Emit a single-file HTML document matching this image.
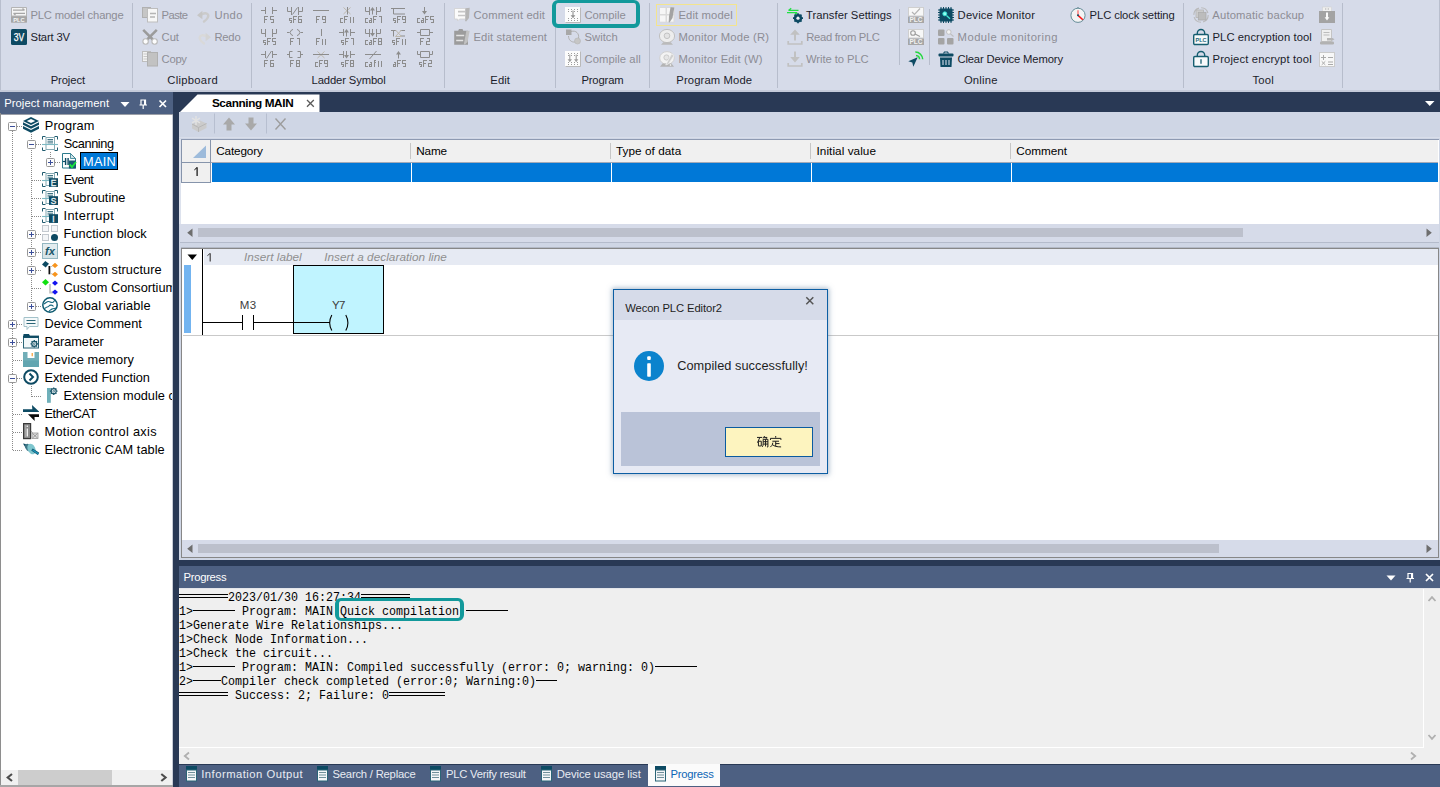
<!DOCTYPE html>
<html><head><meta charset="utf-8"><title>Wecon PLC Editor2</title>
<style>
html,body{margin:0;padding:0;}
body{width:1440px;height:787px;overflow:hidden;position:relative;background:#293955;font-family:"Liberation Sans",sans-serif;font-size:12px;color:#1e1e1e;}
.a{position:absolute;}
svg{display:block;overflow:visible;}
.t{position:absolute;white-space:nowrap;line-height:16px;height:16px;}
.m{position:absolute;white-space:pre;font-family:"Liberation Mono",monospace;font-size:13.5px;line-height:15px;height:15px;color:#000;transform:scaleX(0.8642);transform-origin:0 0;}
</style></head><body>
<div class="a" style="left:0px;top:0px;width:1440px;height:90px;background:#d6dbe9;"></div>
<div class="a" style="left:0px;top:90px;width:1440px;height:2px;background:#c4cad9;"></div>
<div class="a" style="left:0px;top:0px;width:1px;height:90px;background:#b9bfce;"></div>
<div class="a" style="left:1439px;top:0px;width:1px;height:90px;background:#b9bfce;"></div>
<div class="a" style="left:132px;top:3px;width:1px;height:85px;background:#b7bdcc;"></div>
<div class="a" style="left:251px;top:3px;width:1px;height:85px;background:#b7bdcc;"></div>
<div class="a" style="left:444px;top:3px;width:1px;height:85px;background:#b7bdcc;"></div>
<div class="a" style="left:555px;top:3px;width:1px;height:85px;background:#b7bdcc;"></div>
<div class="a" style="left:649px;top:3px;width:1px;height:85px;background:#b7bdcc;"></div>
<div class="a" style="left:777px;top:3px;width:1px;height:85px;background:#b7bdcc;"></div>
<div class="a" style="left:1183px;top:3px;width:1px;height:85px;background:#b7bdcc;"></div>
<div class="a" style="left:1342px;top:3px;width:1px;height:85px;background:#b7bdcc;"></div>
<div class="a" style="left:899px;top:9px;width:1px;height:56px;background:#b7bdcc;"></div>
<div class="a" style="left:929px;top:9px;width:1px;height:56px;background:#b7bdcc;"></div>
<div class="t" style="left:30.40px;top:9px;font-size:11.25px;line-height:12px;height:12px;color:#8d8d95;letter-spacing:-0.16px;">PLC model change</div>
<div class="t" style="left:30.60px;top:31px;font-size:11.25px;line-height:12px;height:12px;color:#1b1b2b;letter-spacing:-0.18px;">Start 3V</div>
<div class="t" style="left:50.70px;top:74px;font-size:11.25px;line-height:12px;height:12px;color:#1b1b2b;letter-spacing:-0.11px;">Project</div>
<div class="t" style="left:161.60px;top:9px;font-size:11.25px;line-height:12px;height:12px;color:#8d8d95;letter-spacing:-0.61px;">Paste</div>
<div class="t" style="left:214.40px;top:9px;font-size:11.25px;line-height:12px;height:12px;color:#8d8d95;letter-spacing:0.37px;">Undo</div>
<div class="t" style="left:161.60px;top:31px;font-size:11.25px;line-height:12px;height:12px;color:#8d8d95;letter-spacing:-0.05px;">Cut</div>
<div class="t" style="left:214.40px;top:31px;font-size:11.25px;line-height:12px;height:12px;color:#8d8d95;letter-spacing:-0.20px;">Redo</div>
<div class="t" style="left:161.60px;top:53px;font-size:11.25px;line-height:12px;height:12px;color:#8d8d95;letter-spacing:-0.29px;">Copy</div>
<div class="t" style="left:167.30px;top:74px;font-size:11.25px;line-height:12px;height:12px;color:#1b1b2b;letter-spacing:0.28px;">Clipboard</div>
<div class="t" style="left:311.50px;top:74px;font-size:11.25px;line-height:12px;height:12px;color:#1b1b2b;letter-spacing:-0.12px;">Ladder Symbol</div>
<div class="t" style="left:473.50px;top:9px;font-size:11.25px;line-height:12px;height:12px;color:#8d8d95;letter-spacing:0.13px;">Comment edit</div>
<div class="t" style="left:473.50px;top:31px;font-size:11.25px;line-height:12px;height:12px;color:#8d8d95;letter-spacing:0.12px;">Edit statement</div>
<div class="t" style="left:490.30px;top:74px;font-size:11.25px;line-height:12px;height:12px;color:#1b1b2b;letter-spacing:0.10px;">Edit</div>
<div class="t" style="left:584.50px;top:9px;font-size:11.25px;line-height:12px;height:12px;color:#8d8d95;letter-spacing:-0.01px;">Compile</div>
<div class="t" style="left:584.50px;top:31px;font-size:11.25px;line-height:12px;height:12px;color:#8d8d95;letter-spacing:0.01px;">Switch</div>
<div class="t" style="left:584.50px;top:53px;font-size:11.25px;line-height:12px;height:12px;color:#8d8d95;letter-spacing:0.06px;">Compile all</div>
<div class="t" style="left:581.40px;top:74px;font-size:11.25px;line-height:12px;height:12px;color:#1b1b2b;letter-spacing:-0.14px;">Program</div>
<div class="a" style="left:656px;top:4px;width:81px;height:22px;background:transparent;border:1px solid #f3e48e;box-sizing:border-box;"></div>
<div class="t" style="left:678.50px;top:9px;font-size:11.25px;line-height:12px;height:12px;color:#8d8d95;letter-spacing:0.12px;">Edit model</div>
<div class="t" style="left:678.50px;top:31px;font-size:11.25px;line-height:12px;height:12px;color:#8d8d95;letter-spacing:0.20px;">Monitor Mode (R)</div>
<div class="t" style="left:678.50px;top:53px;font-size:11.25px;line-height:12px;height:12px;color:#8d8d95;letter-spacing:0.19px;">Monitor Edit (W)</div>
<div class="t" style="left:676.30px;top:74px;font-size:11.25px;line-height:12px;height:12px;color:#1b1b2b;letter-spacing:0.12px;">Program Mode</div>
<div class="t" style="left:806.00px;top:9px;font-size:11.25px;line-height:12px;height:12px;color:#1b1b2b;letter-spacing:0.03px;">Transfer Settings</div>
<div class="t" style="left:806.30px;top:31px;font-size:11.25px;line-height:12px;height:12px;color:#8d8d95;letter-spacing:-0.32px;">Read from PLC</div>
<div class="t" style="left:806.00px;top:53px;font-size:11.25px;line-height:12px;height:12px;color:#8d8d95;letter-spacing:-0.08px;">Write to PLC</div>
<div class="t" style="left:957.60px;top:9px;font-size:11.25px;line-height:12px;height:12px;color:#1b1b2b;letter-spacing:0.18px;">Device Monitor</div>
<div class="t" style="left:957.60px;top:31px;font-size:11.25px;line-height:12px;height:12px;color:#8d8d95;letter-spacing:0.46px;">Module monitoring</div>
<div class="t" style="left:957.40px;top:53px;font-size:11.25px;line-height:12px;height:12px;color:#1b1b2b;letter-spacing:-0.14px;">Clear Device Memory</div>
<div class="t" style="left:1089.60px;top:9px;font-size:11.25px;line-height:12px;height:12px;color:#1b1b2b;letter-spacing:-0.11px;">PLC clock setting</div>
<div class="t" style="left:963.90px;top:74px;font-size:11.25px;line-height:12px;height:12px;color:#1b1b2b;letter-spacing:0.22px;">Online</div>
<div class="t" style="left:1212.30px;top:9px;font-size:11.25px;line-height:12px;height:12px;color:#8d8d95;letter-spacing:0.16px;">Automatic backup</div>
<div class="t" style="left:1212.50px;top:31px;font-size:11.25px;line-height:12px;height:12px;color:#1b1b2b;letter-spacing:0.06px;">PLC encryption tool</div>
<div class="t" style="left:1212.50px;top:53px;font-size:11.25px;line-height:12px;height:12px;color:#1b1b2b;letter-spacing:0.15px;">Project encrypt tool</div>
<div class="t" style="left:1252.50px;top:74px;font-size:11.25px;line-height:12px;height:12px;color:#1b1b2b;letter-spacing:0.22px;">Tool</div>
<div class="a" style="left:552px;top:0px;width:88px;height:28px;background:transparent;border:4px solid #12999b;border-top-width:3px;border-radius:6px;box-sizing:border-box;"></div>
<svg class="a" style="left:11px;top:7px" width="16" height="16" viewBox="0 0 16 16"><rect x="0" y="0" width="16" height="15.500" rx="1" fill="#b4b4b4"/><rect x="1" y="1" width="14" height="7.500" fill="#f5f5f5"/><path d="M2 3.200h11.500M11.500 1.500l2 1.700M14 6.300H2.500M4.500 8L2.500 6.300" stroke="#a6a6a6" stroke-width="1.300" fill="none"/><rect x="0" y="9.500" width="16" height="6" fill="#a6a6a6"/><text x="8" y="14.600" font-size="6.200" font-weight="bold" fill="#f6f6f6" text-anchor="middle" font-family="Liberation Sans" textLength="11.500" lengthAdjust="spacingAndGlyphs">PLC</text></svg>
<svg class="a" style="left:11px;top:29px" width="16" height="16" viewBox="0 0 16 16"><rect x="0" y="0" width="16" height="16" rx="1.500" fill="#0d4a63"/><text x="8" y="11.800" font-size="10.500" fill="#fff" stroke="#fff" stroke-width=".25" text-anchor="middle" font-family="Liberation Sans" textLength="10.500" lengthAdjust="spacingAndGlyphs">3V</text></svg>
<svg class="a" style="left:142px;top:7px" width="16" height="16" viewBox="0 0 16 16"><rect x="0.500" y="0.500" width="8" height="10" fill="#c6c6c6" stroke="#b0b0b0"/><rect x="5.500" y="1.500" width="10" height="13.500" fill="#f7f7f7" stroke="#bdbdbd"/><path d="M8 6.500h6M8 10h5" stroke="#b5b5b5" stroke-width="1.400"/></svg>
<svg class="a" style="left:142px;top:29px" width="16" height="16" viewBox="0 0 16 16"><path d="M1.200 0.800L10.800 10.500M14.800 0.800L5.200 10.500" stroke="#9b9b9b" stroke-width="2.500" fill="none"/><circle cx="3.600" cy="12.500" r="2.700" fill="#fdfdfd" stroke="#b9b9b9" stroke-width="1.100"/><circle cx="12.600" cy="12.500" r="2.700" fill="#fdfdfd" stroke="#b9b9b9" stroke-width="1.100"/></svg>
<svg class="a" style="left:142px;top:51px" width="16" height="16" viewBox="0 0 16 16"><rect x="0.500" y="0.500" width="8" height="10" fill="#f2f2f2" stroke="#bdbdbd"/><path d="M1.500 3h4M1.500 5.500h4M1.500 8h4" stroke="#c8c8c8"/><rect x="5.500" y="1.500" width="10" height="13.500" fill="#c2c2c2" stroke="#b0b0b0"/></svg>
<svg class="a" style="left:197px;top:9px" width="13" height="13" viewBox="0 0 13 13"><path d="M5 5.200C9 3 12.500 5 10.800 8.500C10 10 8.500 11.500 7 12.500" stroke="#cbcbcb" stroke-width="2.400" fill="none" stroke-linecap="round"/><path d="M0 6.200l5.400-4.400v8.400z" fill="#c6c6c6"/></svg>
<svg class="a" style="left:198px;top:31px" width="13" height="13" viewBox="0 0 13 13"><path d="M8 5.200C4 3 0.500 5 2.200 8.500C3 10 4.500 11.500 6 12.500" stroke="#d9d9d9" stroke-width="2.400" fill="none" stroke-linecap="round"/><path d="M13 6.200L7.600 1.800v8.400z" fill="#d4d4d4"/></svg>
<svg class="a" style="left:454px;top:7px" width="16" height="16" viewBox="0 0 16 16"><path d="M0.500 1.500h11v10.500H5.500l-2 2V12h-3z" fill="#fbfbfb" stroke="#d0d0d0" stroke-width=".8"/><path d="M4 4.600h7M4 8.500h7" stroke="#c6c6c6" stroke-width="1.600"/><path d="M11.400 1.200L15.700 0.800 15 11 12.200 14.600 11 14 11.400 12z" fill="#b6b6b6"/></svg>
<svg class="a" style="left:454px;top:29px" width="16" height="16" viewBox="0 0 16 16"><path d="M0.200 1.700h4l.8-1.700h3.500l.8 1.700h4.700v14h-13.800z" fill="#9c9c9c"/><path d="M2.200 6.600h8M2.200 11.400h7" stroke="#e4e4e4" stroke-width="1.500"/><path d="M12.300 2L15.700 1.700 13.600 13 10.500 15.700 10 14.500z" fill="#c2c2c2"/></svg>
<svg class="a" style="left:565px;top:7px" width="16" height="16" viewBox="0 0 16 16"><rect x="0" y="0" width="15.500" height="15.500" fill="#fcfcfc"/><path d="M0.500 15.500h15V0.500" stroke="#b9b9b9" stroke-width="1" fill="none"/><path d="M3.5 2v3M3.5 11v4" stroke="#9c9c9c" stroke-width="1" stroke-dasharray="1 1"/><path d="M6.5 2v3M6.5 11v4" stroke="#9c9c9c" stroke-width="1" stroke-dasharray="1 1"/><path d="M9.5 2v3M9.5 11v4" stroke="#9c9c9c" stroke-width="1" stroke-dasharray="1 1"/><path d="M12.5 2v3M12.5 11v4" stroke="#9c9c9c" stroke-width="1" stroke-dasharray="1 1"/><path d="M8 3.500v6" stroke="#909090" stroke-width="1.100"/><path d="M5.600 8.300h4.800L8 11.300z" fill="#909090"/></svg>
<svg class="a" style="left:565px;top:51px" width="16" height="16" viewBox="0 0 16 16"><rect x="0" y="0" width="15.500" height="15.500" fill="#fcfcfc"/><path d="M0.500 15.500h15V0.500" stroke="#b9b9b9" stroke-width="1" fill="none"/><path d="M3.5 2v3M3.5 11v4" stroke="#9c9c9c" stroke-width="1" stroke-dasharray="1 1"/><path d="M6.5 2v3M6.5 11v4" stroke="#9c9c9c" stroke-width="1" stroke-dasharray="1 1"/><path d="M9.5 2v3M9.5 11v4" stroke="#9c9c9c" stroke-width="1" stroke-dasharray="1 1"/><path d="M12.5 2v3M12.5 11v4" stroke="#9c9c9c" stroke-width="1" stroke-dasharray="1 1"/><path d="M4.800 3.500v6M11.200 3.500v6" stroke="#a0a0a0" stroke-width="1.100"/><path d="M2.600 8.300h4.400L4.800 11.300zM9 8.300h4.400L11.200 11.300z" fill="#a0a0a0"/></svg>
<svg class="a" style="left:565px;top:29px" width="16" height="16" viewBox="0 0 16 16"><path d="M6 2.500c5-1.500 8.500 2 7.500 7M3.500 7c0 4 3 6.500 6.500 6" stroke="#b0b0b0" stroke-width="1" fill="none"/><rect x="1" y="0.500" width="5.500" height="5.500" fill="#a8a8a8"/><circle cx="12.500" cy="12" r="3" fill="#c6c6c6" stroke="#b4b4b4" stroke-width=".6"/></svg>
<svg class="a" style="left:659px;top:7px" width="16" height="16" viewBox="0 0 16 16"><rect x="0" y="0" width="15.500" height="15.700" fill="#dadada"/><rect x="1" y="1" width="5.500" height="6" fill="#f6f6f6"/><rect x="8" y="1" width="6.500" height="6" fill="#f6f6f6"/><rect x="1" y="8.500" width="5.500" height="6.200" fill="#f6f6f6"/><rect x="8" y="8.500" width="6.500" height="6.200" fill="#f6f6f6"/><path d="M11.500 0.300L15.300 0.500 13.500 11l-3 4.500-.8-.3 .3-6z" fill="#a3a3a3"/></svg>
<svg class="a" style="left:659px;top:29px" width="16" height="16" viewBox="0 0 16 16"><ellipse cx="8" cy="7" rx="7.600" ry="6.600" fill="#ededed" stroke="#c0c0c0"/><circle cx="8" cy="6.800" r="2.800" fill="#e3e3e3" stroke="#c3c3c3"/><path d="M2 15.800L4.200 13.300h7.600L14 15.800z" fill="#bababa"/></svg>
<svg class="a" style="left:659px;top:51px" width="16" height="16" viewBox="0 0 16 16"><ellipse cx="8" cy="7" rx="7.300" ry="6.400" fill="#f3f3f3" stroke="#d0d0d0"/><circle cx="7.500" cy="6.500" r="2.600" fill="#e6e6e6" stroke="#cacaca"/><path d="M1 15.800L3.500 12.500h9L15 15.800z" fill="#b4b4b4"/><path d="M12.500 3l2.500 1.500-5.500 8.500-2.800 1z" fill="#cfcfcf" stroke="#f0f0f0" stroke-width=".7"/><circle cx="11.500" cy="14" r=".8" fill="#fff"/></svg>
<svg class="a" style="left:787px;top:7px" width="16" height="16" viewBox="0 0 16 16"><path d="M1.500 3.400h10M4.200 1.300L1.500 3.400" stroke="#1fe043" stroke-width="1.300" fill="none"/><path d="M0 5.600h10.200M8 7.600l2.200-2" stroke="#1fe043" stroke-width="1.300" fill="none"/><g transform="translate(11,11.200)"><circle r="3.100" fill="none" stroke="#0d4a63" stroke-width="2.200"/><g stroke="#0d4a63" stroke-width="1.700"><path d="M0-5V5M-5 0H5M-3.500-3.500l7 7M3.500-3.500l-7 7"/></g><circle r="1.600" fill="#eef1f7"/></g></svg>
<svg class="a" style="left:787px;top:29px" width="16" height="16" viewBox="0 0 16 16"><path d="M8 0.600L12.800 5.800H9V11.400H7V5.800H3.200z" fill="#c1c1c1"/><path d="M1.200 12v3h13.600v-3" stroke="#c1c1c1" stroke-width="1.700" fill="none"/></svg>
<svg class="a" style="left:787px;top:51px" width="16" height="16" viewBox="0 0 16 16"><path d="M7 0.500h2V6h3.800L8 11.400 3.200 6H7z" fill="#c1c1c1"/><path d="M1.200 12v3h13.600v-3" stroke="#c1c1c1" stroke-width="1.700" fill="none"/></svg>
<svg class="a" style="left:908px;top:7px" width="16" height="16" viewBox="0 0 16 16"><rect x="0.500" y="0.500" width="15" height="8.500" fill="#f7f7f7" stroke="#cfcfcf"/><path d="M4 5l2.500 2.500L12 1.500" stroke="#b4b4b4" stroke-width="1.200" fill="none"/><rect x="0" y="9.500" width="16" height="6.500" fill="#a6a6a6"/><text x="8" y="15" font-size="6.500" font-weight="bold" fill="#f2f2f2" text-anchor="middle" font-family="Liberation Sans">PLC</text></svg>
<svg class="a" style="left:908px;top:29px" width="16" height="16" viewBox="0 0 16 16"><rect x="0.500" y="0.500" width="15" height="8.500" fill="#f7f7f7" stroke="#cfcfcf"/><circle cx="5" cy="4" r="2.300" fill="none" stroke="#9c9c9c" stroke-width="1.100"/><path d="M7 5l5 2.500" stroke="#9c9c9c" stroke-width="1.200"/><rect x="0" y="9.500" width="16" height="6.500" fill="#a6a6a6"/><text x="8" y="15" font-size="6.500" font-weight="bold" fill="#f2f2f2" text-anchor="middle" font-family="Liberation Sans">PLC</text></svg>
<svg class="a" style="left:908px;top:51px" width="16" height="16" viewBox="0 0 16 16"><path d="M0.300 10.300L9.700 6.300 5.300 15.800 4.300 11.600z" fill="#0d4a63"/><path d="M8 4.400A3.800 3.800 0 0 1 11.500 8.200M7.300 1.100A7.300 7.300 0 0 1 14.700 8.300" stroke="#22d83c" stroke-width="1.500" fill="none"/></svg>
<svg class="a" style="left:938px;top:7px" width="16" height="16" viewBox="0 0 16 16"><g stroke="#0d4a63" stroke-width="1"><path d="M3 0v16M5.500 0v16M8 0v16M10.500 0v16M13 0v16M0 3h16M0 5.500h16M0 8h16M0 10.500h16M0 13h16"/></g><rect x="1.500" y="1.500" width="13" height="13" rx="1" fill="#0d4a63"/><circle cx="6.800" cy="6.800" r="2" fill="#8ffff0" stroke="#2fe0d2" stroke-width=".9"/><path d="M8.500 8.500l3.500 3.200" stroke="#43e6d6" stroke-width="1.300"/></svg>
<svg class="a" style="left:938px;top:29px" width="16" height="16" viewBox="0 0 16 16"><rect x="0" y="0.500" width="6.500" height="6.500" rx="1" fill="#a4a4a4"/><rect x="0" y="9" width="6.500" height="6.500" rx="1" fill="#a4a4a4"/><rect x="9" y="9" width="6.500" height="6.500" rx="1" fill="#a4a4a4"/><circle cx="10.800" cy="3" r="2.300" fill="#f2f2f2" stroke="#bdbdbd" stroke-width=".9"/><path d="M12.500 4.800L15.500 7.500" stroke="#bdbdbd" stroke-width="1.100"/></svg>
<svg class="a" style="left:938px;top:51px" width="16" height="16" viewBox="0 0 16 16"><path d="M5.500 2.500l1-1.500h3l1 1.500" stroke="#0d4a63" stroke-width="1.200" fill="none"/><rect x="0.500" y="2.500" width="15" height="3" rx="1" fill="#0d4a63"/><path d="M2 6.500h12l-.5 9.500h-11z" fill="#0d4a63"/><path d="M5 9v5M8 9v5M11 9v5" stroke="#d6dbe9" stroke-width="1.100"/></svg>
<svg class="a" style="left:1070px;top:7px" width="16" height="16" viewBox="0 0 16 16"><path d="M8 0v1.200" stroke="#7d9ba5" stroke-width="1.400"/><circle cx="8" cy="8.300" r="7.100" fill="#f3f3f3" stroke="#5f8894" stroke-width=".95"/><path d="M8 3.300V8" stroke="#ff6262" stroke-width="1.200"/><path d="M8.300 8.600l4.500 4.200" stroke="#ff1414" stroke-width="1.500"/><circle cx="8" cy="8.300" r="1" fill="#0d4a63"/></svg>
<svg class="a" style="left:1193px;top:7px" width="16" height="16" viewBox="0 0 16 16"><circle cx="8" cy="8" r="7.200" fill="none" stroke="#b9b9b9" stroke-width="1.100" stroke-dasharray="9 2.300"/><rect x="3" y="3" width="7.500" height="7.500" fill="#cdcdcd" stroke="#b4b4b4" stroke-width=".8"/><rect x="5.300" y="5.300" width="7.700" height="7.700" fill="#bcbcbc" stroke="#ababab" stroke-width=".8"/></svg>
<svg class="a" style="left:1193px;top:29px" width="16" height="16" viewBox="0 0 16 16"><path d="M4.300 5.500V4.200a3.700 3.700 0 0 1 7.400 0v1.300" stroke="#165e70" stroke-width="1.400" fill="none"/><rect x="0.700" y="5.500" width="14.600" height="10" rx="1.200" fill="#f8fafb" stroke="#165e70" stroke-width="1.400"/><text x="8" y="13" font-size="6.200" font-weight="bold" fill="#1f6a7c" text-anchor="middle" font-family="Liberation Sans" textLength="11" lengthAdjust="spacingAndGlyphs">PLC</text></svg>
<svg class="a" style="left:1193px;top:51px" width="16" height="16" viewBox="0 0 16 16"><path d="M4.300 5.500V4.200a3.700 3.700 0 0 1 7.400 0v1.300" stroke="#165e70" stroke-width="1.400" fill="none"/><rect x="0.700" y="5.500" width="14.600" height="10" rx="1.200" fill="#f8fafb" stroke="#165e70" stroke-width="1.400"/><path d="M8 8.300v4.400" stroke="#165e70" stroke-width="1.300"/></svg>
<svg class="a" style="left:1319px;top:7px" width="16" height="16" viewBox="0 0 16 16"><rect x="3.500" y="0" width="9" height="4.500" fill="#f0f0f0" stroke="#d2d2d2" stroke-width=".6"/><path d="M6 2h1.300M8.700 2H10" stroke="#a8a8a8" stroke-width="1"/><rect x="0" y="4" width="16" height="12" fill="#a3a3a3"/><path d="M8 5.500v6" stroke="#fafafa" stroke-width="2"/><path d="M5.600 10.300L8 13.500l2.400-3.200z" fill="#fafafa"/></svg>
<svg class="a" style="left:1319px;top:29px" width="16" height="16" viewBox="0 0 16 16"><path d="M2.500 0.500h10v12h-10z" fill="#efefef" stroke="#c4c4c4"/><path d="M4.500 3.500h6M4.500 6h6" stroke="#bcbcbc" stroke-width="1.100"/><path d="M8 9h5.500l2 1.200-2 1.300H8z" fill="#b6b6b6"/><rect x="1" y="12.500" width="14" height="3" rx="1.300" fill="#b2b2b2"/></svg>
<svg class="a" style="left:1319px;top:51px" width="16" height="16" viewBox="0 0 16 16"><rect x="0.500" y="1.500" width="15" height="14" fill="#f8f8f8" stroke="#cbcbcb"/><path d="M2 6.500h5M4.500 4v5M9 6.500h5M2.700 10.300l3.600 3.600M6.300 10.300l-3.600 3.600M9 11h5M9 13.500h5" stroke="#aaaaaa" stroke-width="1"/></svg>
<svg class="a" style="left:261px;top:7px" width="16" height="16" viewBox="0 0 16 16"><g stroke="#8c8c8c" stroke-width="1" fill="none"><path d="M0 3.500h4.500M4.500 0v7 M16 3.500h-4.500M11.500 0v7"/></g><g stroke="#8c8c8c" stroke-width="1" fill="none" shape-rendering="crispEdges"><path transform="translate(3.5 9.500)" d="M0 6V0H3M0 3H2"/><path transform="translate(9.5 9.500)" d="M3 0H0V3H3V6H0"/></g></svg>
<svg class="a" style="left:287px;top:7px" width="16" height="16" viewBox="0 0 16 16"><g stroke="#8c8c8c" stroke-width="1" fill="none"><path d="M0.500 0v4.500h4M4.500 0v8 M15.500 0v4.500h-4M11.500 0v8 M5.500 7.500L10.500 0.500"/></g><g stroke="#8c8c8c" stroke-width="1" fill="none" shape-rendering="crispEdges"><path transform="translate(2.5 9.500)" d="M2 2H0V4H2V6H0"/><path transform="translate(6.5 9.500)" d="M0 6V0H3M0 3H2"/><path transform="translate(11.5 9.500)" d="M3 0H0V6H3V3H0"/></g></svg>
<svg class="a" style="left:313px;top:7px" width="16" height="16" viewBox="0 0 16 16"><g stroke="#8c8c8c" stroke-width="1" fill="none"><path d="M0 3.500h16"/></g><g stroke="#8c8c8c" stroke-width="1" fill="none" shape-rendering="crispEdges"><path transform="translate(3.5 9.500)" d="M0 6V0H3M0 3H2"/><path transform="translate(9.5 9.500)" d="M3 3H0V0H3V6H0"/></g></svg>
<svg class="a" style="left:339px;top:7px" width="16" height="16" viewBox="0 0 16 16"><g stroke="#8c8c8c" stroke-width="1" fill="none"><path d="M4.500 0.500l7 6.500M11.500 0.500l-7 6.500" stroke="#bdb8ad"/><path d="M8.500 0v7.500"/></g><g stroke="#8c8c8c" stroke-width="1" fill="none" shape-rendering="crispEdges"><path transform="translate(1.5 9.500)" d="M2 2H0V6H2"/><path transform="translate(5.5 9.500)" d="M0 6V0H3M0 3H2"/><path transform="translate(10.5 9.500)" d="M0.500 0V6"/><path transform="translate(13.5 9.500)" d="M0.500 0V6"/></g></svg>
<svg class="a" style="left:365px;top:7px" width="16" height="16" viewBox="0 0 16 16"><g stroke="#8c8c8c" stroke-width="1" fill="none"><path d="M0.500 0v4.500h4M4.500 0v8 M15.500 0v4.500h-4M11.500 0v8"/><path d="M7.500 7.500V1"/><path fill="#8c8c8c" stroke="none" d="M5 3.600L7.500 0l2.500 3.600z"/></g><g stroke="#8c8c8c" stroke-width="1" fill="none" shape-rendering="crispEdges"><path transform="translate(0.5 9.500)" d="M2 2H0V6H2"/><path transform="translate(4.5 9.500)" d="M0 2H2V6H0V4H2"/><path transform="translate(8.5 9.500)" d="M0 6V0H3M0 3H2"/><path transform="translate(13.5 9.500)" d="M0 0H3V6"/></g></svg>
<svg class="a" style="left:391px;top:7px" width="16" height="16" viewBox="0 0 16 16"><g stroke="#8c8c8c" stroke-width="1" fill="none"><path d="M0 1.500h14M2.500 1.500v5.500h11.500"/></g><g stroke="#8c8c8c" stroke-width="1" fill="none" shape-rendering="crispEdges"><path transform="translate(2.5 9.500)" d="M2 2H0V4H2V6H0"/><path transform="translate(6.5 9.500)" d="M0 6V0H3M0 3H2"/><path transform="translate(11.5 9.500)" d="M3 3H0V0H3V6H0"/></g></svg>
<svg class="a" style="left:417px;top:7px" width="16" height="16" viewBox="0 0 16 16"><g stroke="#8c8c8c" stroke-width="1" fill="none"><path d="M7.500 0V6"/><path fill="#8c8c8c" stroke="none" d="M5 3.900L7.500 7.500l2.500-3.600z"/></g><g stroke="#8c8c8c" stroke-width="1" fill="none" shape-rendering="crispEdges"><path transform="translate(0.5 9.500)" d="M2 2H0V6H2"/><path transform="translate(4.5 9.500)" d="M0 2H2V6H0V4H2"/><path transform="translate(8.5 9.500)" d="M0 6V0H3M0 3H2"/><path transform="translate(13.5 9.500)" d="M3 0H0V3H3V6H0"/></g></svg>
<svg class="a" style="left:261px;top:29px" width="16" height="16" viewBox="0 0 16 16"><g stroke="#8c8c8c" stroke-width="1" fill="none"><path d="M0.500 0v4.500h4M4.500 0v8 M15.500 0v4.500h-4M11.500 0v8"/></g><g stroke="#8c8c8c" stroke-width="1" fill="none" shape-rendering="crispEdges"><path transform="translate(2.5 9.500)" d="M2 2H0V4H2V6H0"/><path transform="translate(6.5 9.500)" d="M0 6V0H3M0 3H2"/><path transform="translate(11.5 9.500)" d="M3 0H0V3H3V6H0"/></g></svg>
<svg class="a" style="left:287px;top:29px" width="16" height="16" viewBox="0 0 16 16"><g stroke="#8c8c8c" stroke-width="1" fill="none"><path d="M0 3.500h2.500M16 3.500h-2.500M6 0.500L4.500 1 3 3.500 4.500 6 6 6.500M10 0.500L11.500 1 13 3.500 11.500 6 10 6.500"/></g><g stroke="#8c8c8c" stroke-width="1" fill="none" shape-rendering="crispEdges"><path transform="translate(3.5 9.500)" d="M0 6V0H3M0 3H2"/><path transform="translate(9.5 9.500)" d="M0 0H3V6"/></g></svg>
<svg class="a" style="left:313px;top:29px" width="16" height="16" viewBox="0 0 16 16"><g stroke="#8c8c8c" stroke-width="1" fill="none"><path d="M8.500 0v7"/></g><g stroke="#8c8c8c" stroke-width="1" fill="none" shape-rendering="crispEdges"><path transform="translate(3.5 9.500)" d="M0 6V0H3M0 3H2"/><path transform="translate(8.5 9.500)" d="M0.500 0V6"/><path transform="translate(11.5 9.500)" d="M0.500 0V6"/></g></svg>
<svg class="a" style="left:339px;top:29px" width="16" height="16" viewBox="0 0 16 16"><g stroke="#8c8c8c" stroke-width="1" fill="none"><path d="M0 3.500h4.500M4.500 0v7 M16 3.500h-4.500M11.500 0v7"/><path d="M7.500 7.500V1"/><path fill="#8c8c8c" stroke="none" d="M5 3.600L7.500 0l2.500 3.600z"/></g><g stroke="#8c8c8c" stroke-width="1" fill="none" shape-rendering="crispEdges"><path transform="translate(2.5 9.500)" d="M2 2H0V4H2V6H0"/><path transform="translate(6.5 9.500)" d="M0 6V0H3M0 3H2"/><path transform="translate(11.5 9.500)" d="M0 0H3V6"/></g></svg>
<svg class="a" style="left:365px;top:29px" width="16" height="16" viewBox="0 0 16 16"><g stroke="#8c8c8c" stroke-width="1" fill="none"><path d="M0.500 0v4.500h4M4.500 0v8 M15.500 0v4.500h-4M11.500 0v8"/><path d="M7.500 0V6"/><path fill="#8c8c8c" stroke="none" d="M5 3.900L7.500 7.500l2.500-3.600z"/></g><g stroke="#8c8c8c" stroke-width="1" fill="none" shape-rendering="crispEdges"><path transform="translate(0.5 9.500)" d="M2 2H0V6H2"/><path transform="translate(4.5 9.500)" d="M0 2H2V6H0V4H2"/><path transform="translate(8.5 9.500)" d="M0 6V0H3M0 3H2"/><path transform="translate(13.5 9.500)" d="M0 0H3V6H0ZM0 3H3"/></g></svg>
<svg class="a" style="left:391px;top:29px" width="16" height="16" viewBox="0 0 16 16"><g stroke="#8c8c8c" stroke-width="1" fill="none"><path d="M0 1.500h5M2.500 1.500v6M9.500 1.500h4.500M9.500 7h4.500" /><path d="M4.500 1l6 6.500M10.500 1l-6 6.500M4.500 7.500h6" stroke="#bdb8ad"/></g><g stroke="#8c8c8c" stroke-width="1" fill="none" shape-rendering="crispEdges"><path transform="translate(1.5 9.500)" d="M2 2H0V4H2V6H0"/><path transform="translate(5.5 9.500)" d="M0 6V0H3M0 3H2"/><path transform="translate(10.5 9.500)" d="M0.500 0V6"/><path transform="translate(13.5 9.500)" d="M0.500 0V6"/></g></svg>
<svg class="a" style="left:417px;top:29px" width="16" height="16" viewBox="0 0 16 16"><g stroke="#8c8c8c" stroke-width="1" fill="none"><path d="M0 3.500h3.500M12.500 3.500H16M3.500 0.500h9v6h-9z"/></g><g stroke="#8c8c8c" stroke-width="1" fill="none" shape-rendering="crispEdges"><path transform="translate(3.5 9.500)" d="M0 6V0H3M0 3H2"/><path transform="translate(9.5 9.500)" d="M0 0H3V3H0V6H3"/></g></svg>
<svg class="a" style="left:261px;top:51px" width="16" height="16" viewBox="0 0 16 16"><g stroke="#8c8c8c" stroke-width="1" fill="none"><path d="M0 3.500h4.500M4.500 0v7 M16 3.500h-4.500M11.500 0v7 M5.500 7.500L10.500 0"/></g><g stroke="#8c8c8c" stroke-width="1" fill="none" shape-rendering="crispEdges"><path transform="translate(3.5 9.500)" d="M0 6V0H3M0 3H2"/><path transform="translate(9.5 9.500)" d="M3 0H0V6H3V3H0"/></g></svg>
<svg class="a" style="left:287px;top:51px" width="16" height="16" viewBox="0 0 16 16"><g stroke="#8c8c8c" stroke-width="1" fill="none"><path d="M0 3.500h2.500M16 3.500h-2.500M5.500 0.500h-3v6h3M10.500 0.500h3v6h-3"/></g><g stroke="#8c8c8c" stroke-width="1" fill="none" shape-rendering="crispEdges"><path transform="translate(3.5 9.500)" d="M0 6V0H3M0 3H2"/><path transform="translate(9.5 9.500)" d="M0 0H3V6H0ZM0 3H3"/></g></svg>
<svg class="a" style="left:313px;top:51px" width="16" height="16" viewBox="0 0 16 16"><g stroke="#8c8c8c" stroke-width="1" fill="none"><path d="M4.500 0.500l7 6.500M11.500 0.500l-7 6.500" stroke="#bdb8ad"/><path d="M0 3.500h16"/></g><g stroke="#8c8c8c" stroke-width="1" fill="none" shape-rendering="crispEdges"><path transform="translate(2.5 9.500)" d="M2 2H0V6H2"/><path transform="translate(6.5 9.500)" d="M0 6V0H3M0 3H2"/><path transform="translate(11.5 9.500)" d="M3 3H0V0H3V6H0"/></g></svg>
<svg class="a" style="left:339px;top:51px" width="16" height="16" viewBox="0 0 16 16"><g stroke="#8c8c8c" stroke-width="1" fill="none"><path d="M0 3.500h4.500M4.500 0v7 M16 3.500h-4.500M11.500 0v7"/><path d="M7.500 0V6"/><path fill="#8c8c8c" stroke="none" d="M5 3.900L7.500 7.500l2.500-3.600z"/></g><g stroke="#8c8c8c" stroke-width="1" fill="none" shape-rendering="crispEdges"><path transform="translate(2.5 9.500)" d="M2 2H0V4H2V6H0"/><path transform="translate(6.5 9.500)" d="M0 6V0H3M0 3H2"/><path transform="translate(11.5 9.500)" d="M0 0H3V6H0ZM0 3H3"/></g></svg>
<svg class="a" style="left:365px;top:51px" width="16" height="16" viewBox="0 0 16 16"><g stroke="#8c8c8c" stroke-width="1" fill="none"><path d="M0 3.500h16M4.500 8L11.500 0"/></g><g stroke="#8c8c8c" stroke-width="1" fill="none" shape-rendering="crispEdges"><path transform="translate(0.5 9.500)" d="M2 2H0V6H2"/><path transform="translate(4.5 9.500)" d="M0 2H2V6H0V4H2"/><path transform="translate(8.5 9.500)" d="M2 0H1V6M0 2H2"/><path transform="translate(12.5 9.500)" d="M0.500 0V6"/><path transform="translate(15.5 9.500)" d="M0.500 0V6"/></g></svg>
<svg class="a" style="left:391px;top:51px" width="16" height="16" viewBox="0 0 16 16"><g stroke="#8c8c8c" stroke-width="1" fill="none"><path d="M7.500 7.500V1"/><path fill="#8c8c8c" stroke="none" d="M5 3.600L7.500 0l2.500 3.600z"/></g><g stroke="#8c8c8c" stroke-width="1" fill="none" shape-rendering="crispEdges"><path transform="translate(2.5 9.500)" d="M0 2H2V6H0V4H2"/><path transform="translate(6.5 9.500)" d="M0 6V0H3M0 3H2"/><path transform="translate(11.5 9.500)" d="M3 0H0V3H3V6H0"/></g></svg>
<svg class="a" style="left:417px;top:51px" width="16" height="16" viewBox="0 0 16 16"><g stroke="#8c8c8c" stroke-width="1" fill="none"><path d="M0.500 0v3.500h3M15.500 0v3.500h-3M3.500 0.500h9v6h-9z"/></g><g stroke="#8c8c8c" stroke-width="1" fill="none" shape-rendering="crispEdges"><path transform="translate(2.5 9.500)" d="M2 2H0V4H2V6H0"/><path transform="translate(6.5 9.500)" d="M0 6V0H3M0 3H2"/><path transform="translate(11.5 9.500)" d="M0 0H3V3H0V6H3"/></g></svg>
<div class="a" style="left:0px;top:92px;width:173px;height:22px;background:#4d6082;"></div>
<div class="t" style="left:4.20px;top:97px;font-size:11.25px;line-height:12px;height:12px;color:#ffffff;letter-spacing:0.06px;">Project management</div>
<svg class="a" style="left:119px;top:98px" width="50" height="12" viewBox="0 0 50 12"><path d="M1.500 4h9l-4.500 5z" fill="#fff"/><path d="M22 2h4.500v5h-4.500zM20.500 7h7.500M24.200 7v4" stroke="#fff" stroke-width="1.200" fill="none"/><path d="M25.800 2v5" stroke="#fff" stroke-width="1.600"/><path d="M40.500 2.500l6.500 6.500M47 2.500l-6.500 6.500" stroke="#fff" stroke-width="1.700" fill="none"/></svg>
<div class="a" style="left:0px;top:114px;width:173px;height:673px;background:#ffffff;"></div>
<div class="a" style="left:0px;top:114px;width:173px;height:1px;background:#9b9fa8;"></div>
<div class="a" style="left:0px;top:113px;width:1px;height:674px;background:#8e8e8e;"></div>
<div class="a" style="left:172px;top:115px;width:1px;height:672px;background:#c8ccd6;"></div>
<div class="a" style="left:12px;top:131px;width:1px;height:320px;background:repeating-linear-gradient(to bottom,#8a8a8a 0 1px,transparent 1px 2px);"></div>
<div class="a" style="left:31px;top:134px;width:1px;height:173px;background:repeating-linear-gradient(to bottom,#8a8a8a 0 1px,transparent 1px 2px);"></div>
<div class="a" style="left:50px;top:152px;width:1px;height:11px;background:repeating-linear-gradient(to bottom,#8a8a8a 0 1px,transparent 1px 2px);"></div>
<div class="a" style="left:31px;top:386px;width:1px;height:11px;background:repeating-linear-gradient(to bottom,#8a8a8a 0 1px,transparent 1px 2px);"></div>
<div class="a" style="left:17px;top:126px;width:5px;height:1px;background:repeating-linear-gradient(to right,#8a8a8a 0 1px,transparent 1px 2px);"></div>
<div class="a" style="left:36px;top:144px;width:5px;height:1px;background:repeating-linear-gradient(to right,#8a8a8a 0 1px,transparent 1px 2px);"></div>
<div class="a" style="left:55px;top:162px;width:6px;height:1px;background:repeating-linear-gradient(to right,#8a8a8a 0 1px,transparent 1px 2px);"></div>
<div class="a" style="left:32px;top:180px;width:9px;height:1px;background:repeating-linear-gradient(to right,#8a8a8a 0 1px,transparent 1px 2px);"></div>
<div class="a" style="left:32px;top:198px;width:9px;height:1px;background:repeating-linear-gradient(to right,#8a8a8a 0 1px,transparent 1px 2px);"></div>
<div class="a" style="left:32px;top:216px;width:9px;height:1px;background:repeating-linear-gradient(to right,#8a8a8a 0 1px,transparent 1px 2px);"></div>
<div class="a" style="left:36px;top:234px;width:5px;height:1px;background:repeating-linear-gradient(to right,#8a8a8a 0 1px,transparent 1px 2px);"></div>
<div class="a" style="left:36px;top:252px;width:5px;height:1px;background:repeating-linear-gradient(to right,#8a8a8a 0 1px,transparent 1px 2px);"></div>
<div class="a" style="left:36px;top:270px;width:5px;height:1px;background:repeating-linear-gradient(to right,#8a8a8a 0 1px,transparent 1px 2px);"></div>
<div class="a" style="left:32px;top:288px;width:9px;height:1px;background:repeating-linear-gradient(to right,#8a8a8a 0 1px,transparent 1px 2px);"></div>
<div class="a" style="left:36px;top:306px;width:5px;height:1px;background:repeating-linear-gradient(to right,#8a8a8a 0 1px,transparent 1px 2px);"></div>
<div class="a" style="left:17px;top:324px;width:5px;height:1px;background:repeating-linear-gradient(to right,#8a8a8a 0 1px,transparent 1px 2px);"></div>
<div class="a" style="left:17px;top:342px;width:5px;height:1px;background:repeating-linear-gradient(to right,#8a8a8a 0 1px,transparent 1px 2px);"></div>
<div class="a" style="left:13px;top:360px;width:9px;height:1px;background:repeating-linear-gradient(to right,#8a8a8a 0 1px,transparent 1px 2px);"></div>
<div class="a" style="left:17px;top:378px;width:5px;height:1px;background:repeating-linear-gradient(to right,#8a8a8a 0 1px,transparent 1px 2px);"></div>
<div class="a" style="left:32px;top:396px;width:9px;height:1px;background:repeating-linear-gradient(to right,#8a8a8a 0 1px,transparent 1px 2px);"></div>
<div class="a" style="left:13px;top:414px;width:9px;height:1px;background:repeating-linear-gradient(to right,#8a8a8a 0 1px,transparent 1px 2px);"></div>
<div class="a" style="left:13px;top:432px;width:9px;height:1px;background:repeating-linear-gradient(to right,#8a8a8a 0 1px,transparent 1px 2px);"></div>
<div class="a" style="left:13px;top:450px;width:9px;height:1px;background:repeating-linear-gradient(to right,#8a8a8a 0 1px,transparent 1px 2px);"></div>
<svg class="a" style="left:8px;top:122px" width="9" height="9" viewBox="0 0 9 9"><rect x="0.500" y="0.500" width="8" height="8" rx="1" fill="#fdfdfd" stroke="#979797"/><path d="M2 4.500h5" stroke="#3b4e9a" stroke-width="1"/></svg>
<svg class="a" style="left:23px;top:117px" width="16" height="16" viewBox="0 0 16 16"><path d="M8 0L16 4 8 8 0 4z" fill="#0d4a63"/><path d="M8 1.900L12.200 4 8 6.100 3.800 4z" fill="#fff"/><path d="M0 5.300L8 9.300 16 5.300V7.800L8 11.800 0 7.800z" fill="#0d4a63"/><path d="M0 9.100L8 13.100 16 9.100V11.700L8 15.800 0 11.700z" fill="#0d4a63"/></svg>
<div class="t" style="left:44.75px;top:118px;font-size:12.75px;line-height:15px;height:15px;color:#000000;letter-spacing:0.13px;">Program</div>
<svg class="a" style="left:27px;top:140px" width="9" height="9" viewBox="0 0 9 9"><rect x="0.500" y="0.500" width="8" height="8" rx="1" fill="#fdfdfd" stroke="#979797"/><path d="M2 4.500h5" stroke="#3b4e9a" stroke-width="1"/></svg>
<svg class="a" style="left:42px;top:136px" width="16" height="16" viewBox="0 0 16 16"><path d="M0.500 3.500v-3h3M12.500 0.500h3v3M15.500 11.500v3h-3M3.500 14.500h-3v-3" stroke="#1f5b6e" stroke-width="1" fill="none"/><rect x="4" y="1.500" width="8.500" height="12" fill="#fdfefe" stroke="#86aab3" stroke-width="1"/><path d="M5.500 3.500h5.500M5.500 5.200h5.500M5.500 6.900h5.500" stroke="#2b6577" stroke-width=".9"/><path d="M0 8.500h16" stroke="#7db9c3" stroke-width="1.100"/></svg>
<div class="t" style="left:63.75px;top:136px;font-size:12.75px;line-height:15px;height:15px;color:#000000;letter-spacing:-0.42px;">Scanning</div>
<svg class="a" style="left:46px;top:158px" width="9" height="9" viewBox="0 0 9 9"><rect x="0.500" y="0.500" width="8" height="8" rx="1" fill="#fdfdfd" stroke="#979797"/><path d="M2 4.500h5" stroke="#3b4e9a" stroke-width="1"/><path d="M4.500 2v5" stroke="#3b4e9a" stroke-width="1"/></svg>
<svg class="a" style="left:61px;top:153px" width="16" height="16" viewBox="0 0 16 16"><path d="M1.500 0.500h8l5 5v9.500h-13z" fill="#fdfefe" stroke="#2b7a8c" stroke-width="1"/><path d="M9.500 0.500v5h5z" fill="#d3e3e8" stroke="#2b7a8c" stroke-width=".8"/><path d="M1.800 8.500h2.400" stroke="#0d4a63" stroke-width="1.200"/><path d="M4.600 5v7M7.100 5v7" stroke="#0d4a63" stroke-width="1.400"/><rect x="7.900" y="7.500" width="7.100" height="8" fill="#1b5a72"/><path d="M8.800 11.300l2.200 2.700 4-5" stroke="#19e63c" stroke-width="1.900" fill="none"/></svg>
<div class="a" style="left:80px;top:152px;width:38px;height:18px;background:#0078d7;border:1px solid #000;box-sizing:border-box;"></div>
<div class="t" style="left:83.10px;top:154px;font-size:12.75px;line-height:15px;height:15px;color:#ffffff;letter-spacing:0.21px;">MAIN</div>
<svg class="a" style="left:42px;top:172px" width="16" height="16" viewBox="0 0 16 16"><path d="M0.500 3.500v-3h3M12.500 0.500h3v3M15.500 11.500v3h-3M3.500 14.500h-3v-3" stroke="#1f5b6e" stroke-width="1" fill="none"/><rect x="4" y="1.500" width="8.500" height="12" fill="#fdfefe" stroke="#86aab3" stroke-width="1"/><path d="M5.500 3.500h5.500M5.500 5.200h5.500M5.500 6.900h5.500" stroke="#2b6577" stroke-width=".9"/><path d="M0 8.500h16" stroke="#7db9c3" stroke-width="1.100"/><rect x="7" y="6.200" width="9" height="8.700" fill="#0d4a63"/><text x="11.500" y="13.500" font-size="8.300" fill="#eef4f6" stroke="#eef4f6" stroke-width=".3" text-anchor="middle" font-family="Liberation Sans">E</text></svg>
<div class="t" style="left:63.75px;top:172px;font-size:12.75px;line-height:15px;height:15px;color:#000000;letter-spacing:-0.64px;">Event</div>
<svg class="a" style="left:42px;top:190px" width="16" height="16" viewBox="0 0 16 16"><path d="M0.500 3.500v-3h3M12.500 0.500h3v3M15.500 11.500v3h-3M3.500 14.500h-3v-3" stroke="#1f5b6e" stroke-width="1" fill="none"/><rect x="4" y="1.500" width="8.500" height="12" fill="#fdfefe" stroke="#86aab3" stroke-width="1"/><path d="M5.500 3.500h5.500M5.500 5.200h5.500M5.500 6.900h5.500" stroke="#2b6577" stroke-width=".9"/><path d="M0 8.500h16" stroke="#7db9c3" stroke-width="1.100"/><rect x="7" y="6.200" width="9" height="8.700" fill="#0d4a63"/><text x="11.500" y="13.500" font-size="8.300" fill="#eef4f6" stroke="#eef4f6" stroke-width=".3" text-anchor="middle" font-family="Liberation Sans">S</text></svg>
<div class="t" style="left:63.75px;top:190px;font-size:12.75px;line-height:15px;height:15px;color:#000000;">Subroutine</div>
<svg class="a" style="left:42px;top:208px" width="16" height="16" viewBox="0 0 16 16"><path d="M0.500 3.500v-3h3M12.500 0.500h3v3M15.500 11.500v3h-3M3.500 14.500h-3v-3" stroke="#1f5b6e" stroke-width="1" fill="none"/><rect x="4" y="1.500" width="8.500" height="12" fill="#fdfefe" stroke="#86aab3" stroke-width="1"/><path d="M5.500 3.500h5.500M5.500 5.200h5.500M5.500 6.900h5.500" stroke="#2b6577" stroke-width=".9"/><path d="M0 8.500h16" stroke="#7db9c3" stroke-width="1.100"/><rect x="7" y="6.200" width="9" height="8.700" fill="#0d4a63"/><text x="11.500" y="13.500" font-size="8.300" fill="#eef4f6" stroke="#eef4f6" stroke-width=".3" text-anchor="middle" font-family="Liberation Sans">I</text></svg>
<div class="t" style="left:63.50px;top:208px;font-size:12.75px;line-height:15px;height:15px;color:#000000;letter-spacing:0.35px;">Interrupt</div>
<svg class="a" style="left:27px;top:230px" width="9" height="9" viewBox="0 0 9 9"><rect x="0.500" y="0.500" width="8" height="8" rx="1" fill="#fdfdfd" stroke="#979797"/><path d="M2 4.500h5" stroke="#3b4e9a" stroke-width="1"/><path d="M4.500 2v5" stroke="#3b4e9a" stroke-width="1"/></svg>
<svg class="a" style="left:42px;top:225px" width="16" height="16" viewBox="0 0 16 16"><rect x="0.500" y="0.500" width="6" height="6" fill="#f3f5f7" stroke="#c3c9cf"/><rect x="9.500" y="0.500" width="6" height="6" fill="#f3f5f7" stroke="#c3c9cf"/><rect x="0.500" y="9.500" width="6" height="6" fill="#f3f5f7" stroke="#c3c9cf"/><circle cx="12.500" cy="12.500" r="3.500" fill="#0d4a63"/></svg>
<div class="t" style="left:63.50px;top:226px;font-size:12.75px;line-height:15px;height:15px;color:#000000;letter-spacing:0.08px;">Function block</div>
<svg class="a" style="left:27px;top:248px" width="9" height="9" viewBox="0 0 9 9"><rect x="0.500" y="0.500" width="8" height="8" rx="1" fill="#fdfdfd" stroke="#979797"/><path d="M2 4.500h5" stroke="#3b4e9a" stroke-width="1"/><path d="M4.500 2v5" stroke="#3b4e9a" stroke-width="1"/></svg>
<svg class="a" style="left:42px;top:243px" width="16" height="16" viewBox="0 0 16 16"><rect x="0.500" y="0.500" width="15" height="15" fill="#e3ecef" stroke="#93b7c1" stroke-width="1"/><rect x="1" y="8" width="14" height="7" fill="#d5e3e7"/><text x="8" y="11.500" font-size="10.500" font-style="italic" font-weight="bold" fill="#1a566a" text-anchor="middle" font-family="Liberation Sans" textLength="10" lengthAdjust="spacingAndGlyphs">fx</text></svg>
<div class="t" style="left:63.50px;top:244px;font-size:12.75px;line-height:15px;height:15px;color:#000000;letter-spacing:-0.23px;">Function</div>
<svg class="a" style="left:27px;top:266px" width="9" height="9" viewBox="0 0 9 9"><rect x="0.500" y="0.500" width="8" height="8" rx="1" fill="#fdfdfd" stroke="#979797"/><path d="M2 4.500h5" stroke="#3b4e9a" stroke-width="1"/><path d="M4.500 2v5" stroke="#3b4e9a" stroke-width="1"/></svg>
<svg class="a" style="left:42px;top:261px" width="16" height="16" viewBox="0 0 16 16"><path d="M7.400 5v8.300" stroke="#111" stroke-width="1.800"/><path d="M8 6.500l3-2M8 12l3 1.500" stroke="#c4c4c4" stroke-width="1"/><path d="M3.300 0l3.700 2.800-3.300 3.600L0 3.500z" fill="#0d4a63"/><path d="M13 1.800l3 2.600-3 2.600-3-2.600zM13 10.700l3 2.600-3 2.600-3-2.600z" fill="#f7941d"/></svg>
<div class="t" style="left:63.50px;top:262px;font-size:12.75px;line-height:15px;height:15px;color:#000000;letter-spacing:0.07px;">Custom structure</div>
<svg class="a" style="left:42px;top:279px" width="16" height="16" viewBox="0 0 16 16"><path d="M8 5v8.500h3" stroke="#c6c6c6" stroke-width="1.800" fill="none"/><path d="M3.500 0l3.500 3.300-3.500 3.300L0 3.300z" fill="#10e010"/><path d="M13 1.500l3 2.600-3 2.600-3-2.600zM13 10.500l3 2.600-3 2.600-3-2.600z" fill="#1414f0"/></svg>
<div class="t" style="left:63.50px;top:280px;font-size:12.75px;line-height:15px;height:15px;color:#000000;width:108.5px;overflow:hidden;">Custom Consortium</div>
<svg class="a" style="left:27px;top:302px" width="9" height="9" viewBox="0 0 9 9"><rect x="0.500" y="0.500" width="8" height="8" rx="1" fill="#fdfdfd" stroke="#979797"/><path d="M2 4.500h5" stroke="#3b4e9a" stroke-width="1"/><path d="M4.500 2v5" stroke="#3b4e9a" stroke-width="1"/></svg>
<svg class="a" style="left:42px;top:297px" width="16" height="16" viewBox="0 0 16 16"><circle cx="8" cy="8" r="7.200" fill="#fff" stroke="#0d5a70" stroke-width="1.500"/><path d="M1.500 7c2-.5 2.500-2 4.500-2.500s2.500 1.500 4.500 1 1.500-2.500 3-2.500M3 11.500c1-2 3-1 4-2.500s3.500-1 4.500.5M7 15c0-2 2-2 3-3s3 0 4-1" stroke="#1a6a80" stroke-width="1.100" fill="none"/></svg>
<div class="t" style="left:63.50px;top:298px;font-size:12.75px;line-height:15px;height:15px;color:#000000;letter-spacing:0.15px;">Global variable</div>
<svg class="a" style="left:8px;top:320px" width="9" height="9" viewBox="0 0 9 9"><rect x="0.500" y="0.500" width="8" height="8" rx="1" fill="#fdfdfd" stroke="#979797"/><path d="M2 4.500h5" stroke="#3b4e9a" stroke-width="1"/><path d="M4.500 2v5" stroke="#3b4e9a" stroke-width="1"/></svg>
<svg class="a" style="left:23px;top:315px" width="16" height="16" viewBox="0 0 16 16"><path d="M1 2.500h14v9H6.500l-2.500 3V11.500H1z" fill="#f5f9fa" stroke="#a3c2ca" stroke-width="1"/><path d="M3.500 5.500h9M3.500 8.500h9" stroke="#2b6577" stroke-width="1.100"/></svg>
<div class="t" style="left:44.50px;top:316px;font-size:12.75px;line-height:15px;height:15px;color:#000000;letter-spacing:-0.04px;">Device Comment</div>
<svg class="a" style="left:8px;top:338px" width="9" height="9" viewBox="0 0 9 9"><rect x="0.500" y="0.500" width="8" height="8" rx="1" fill="#fdfdfd" stroke="#979797"/><path d="M2 4.500h5" stroke="#3b4e9a" stroke-width="1"/><path d="M4.500 2v5" stroke="#3b4e9a" stroke-width="1"/></svg>
<svg class="a" style="left:23px;top:333px" width="16" height="16" viewBox="0 0 16 16"><path d="M0.500 3V1h5.500l1 2z" fill="#0d4a63"/><rect x="0.500" y="4.500" width="15" height="10.500" fill="#f1f7f9" stroke="#2b6577" stroke-width="1"/><rect x="0" y="2.600" width="16" height="2.200" fill="#0d4a63"/><path d="M13.60 10.80L15.10 10.80M12.93 12.43L13.99 13.49M11.30 13.10L11.30 14.60M9.67 12.43L8.61 13.49M9.00 10.80L7.50 10.80M9.67 9.17L8.61 8.11M11.30 8.50L11.30 7.00M12.93 9.17L13.99 8.11" stroke="#1a566a" stroke-width="1.300"/><circle cx="11.3" cy="10.8" r="2.5" fill="#fff" stroke="#1a566a" stroke-width="1.200"/><circle cx="11.3" cy="10.8" r=".9" fill="#fff" stroke="#1a566a" stroke-width=".7"/></svg>
<div class="t" style="left:44.50px;top:334px;font-size:12.75px;line-height:15px;height:15px;color:#000000;letter-spacing:-0.04px;">Parameter</div>
<svg class="a" style="left:23px;top:351px" width="16" height="16" viewBox="0 0 16 16"><path d="M0 1h4.500v6h7V1H16v15H0z" fill="#71aeb8"/><rect x="0" y="9.500" width="16" height="6.500" fill="#62a5b0"/><path d="M9.200 2v3.300" stroke="#f7941d" stroke-width="1.100"/></svg>
<div class="t" style="left:44.50px;top:352px;font-size:12.75px;line-height:15px;height:15px;color:#000000;letter-spacing:0.07px;">Device memory</div>
<svg class="a" style="left:8px;top:374px" width="9" height="9" viewBox="0 0 9 9"><rect x="0.500" y="0.500" width="8" height="8" rx="1" fill="#fdfdfd" stroke="#979797"/><path d="M2 4.500h5" stroke="#3b4e9a" stroke-width="1"/></svg>
<svg class="a" style="left:23px;top:369px" width="16" height="16" viewBox="0 0 16 16"><circle cx="8" cy="8" r="6.800" fill="#fff" stroke="#0d4a63" stroke-width="2"/><path d="M6.500 4.500L10 8l-3.500 3.500" stroke="#0d4a63" stroke-width="2" fill="none"/></svg>
<div class="t" style="left:44.50px;top:370px;font-size:12.75px;line-height:15px;height:15px;color:#000000;letter-spacing:-0.06px;">Extended Function</div>
<svg class="a" style="left:42px;top:387px" width="16" height="16" viewBox="0 0 16 16"><rect x="5" y="1" width="3.800" height="14.800" fill="#6fb0ba"/><path d="M14.00 4.20L15.50 4.20M13.33 5.83L14.39 6.89M11.70 6.50L11.70 8.00M10.07 5.83L9.01 6.89M9.40 4.20L7.90 4.20M10.07 2.57L9.01 1.51M11.70 1.90L11.70 0.40M13.33 2.57L14.39 1.51" stroke="#1a566a" stroke-width="1.300"/><circle cx="11.7" cy="4.2" r="2.5" fill="#fff" stroke="#1a566a" stroke-width="1.200"/><circle cx="11.7" cy="4.2" r=".9" fill="#fff" stroke="#1a566a" stroke-width=".7"/></svg>
<div class="t" style="left:63.50px;top:388px;font-size:12.75px;line-height:15px;height:15px;color:#000000;width:108.5px;overflow:hidden;">Extension module configuration</div>
<svg class="a" style="left:23px;top:405px" width="16" height="16" viewBox="0 0 16 16"><path d="M0 4.200H9.300L9 0 16 6.500V7H0z" fill="#0d4a63"/><path d="M5 9.200H16V12H11.500L11.700 16z" fill="#0a0a0a"/></svg>
<div class="t" style="left:44.50px;top:406px;font-size:12.75px;line-height:15px;height:15px;color:#000000;letter-spacing:-0.43px;">EtherCAT</div>
<svg class="a" style="left:23px;top:423px" width="16" height="16" viewBox="0 0 16 16"><rect x="0.600" y="0.600" width="7" height="15" fill="#8c8c8c" stroke="#3a3a3a" stroke-width="1.200"/><path d="M4.300 5.500v8" stroke="#f4f4f4" stroke-width="1.300"/><path d="M4.300 2.500v1.500" stroke="#f4f4f4" stroke-width="1.300"/><path d="M2.300 2v12" stroke="#b5b5b5" stroke-width=".8"/><rect x="9" y="10" width="6" height="5.500" fill="#dedede" stroke="#9a9a9a" stroke-width=".8"/><path d="M9.500 10.500l5 4.500M14.500 10.500l-5 4.500M8 8l1.500 2" stroke="#8a8a8a" stroke-width=".8"/></svg>
<div class="t" style="left:44.50px;top:424px;font-size:12.75px;line-height:15px;height:15px;color:#000000;letter-spacing:0.32px;">Motion control axis</div>
<svg class="a" style="left:23px;top:441px" width="16" height="16" viewBox="0 0 16 16"><path d="M0 2.500l2.500.5 2 3-1.500 1.500z" fill="#0d4a63"/><ellipse cx="5" cy="6.500" rx="2.600" ry="3.800" transform="rotate(-25 5 6.500)" fill="#3d7686"/><ellipse cx="8.500" cy="8" rx="3.800" ry="5.600" transform="rotate(-25 8.500 8)" fill="#7fc6ce"/><path d="M9 8.500l6.500 4.300" stroke="#0d4a63" stroke-width="2.600"/><path d="M9.500 8.800l6 4" stroke="#1f95b8" stroke-width="1.400"/></svg>
<div class="t" style="left:44.50px;top:442px;font-size:12.75px;line-height:15px;height:15px;color:#000000;letter-spacing:0.06px;">Electronic CAM table</div>
<div class="a" style="left:1px;top:770px;width:171px;height:15px;background:#f0f0f0;"></div>
<div class="a" style="left:18px;top:770px;width:94px;height:15px;background:#cdcdcd;"></div>
<div class="a" style="left:0px;top:785px;width:173px;height:2px;background:#a6a6a6;"></div>
<svg class="a" style="left:1px;top:770px" width="171" height="15" viewBox="0 0 171 15"><path d="M11 4l-4.300 3.500 4.300 3.500M160.300 4l4.300 3.500-4.300 3.500" stroke="#4c4c4c" stroke-width="2.100" fill="none"/></svg>
<div class="a" style="left:173px;top:92px;width:6px;height:695px;background:#293955;"></div>
<svg class="a" style="left:179px;top:94px" width="142" height="18" viewBox="0 0 142 18"><path d="M1 18L18.500 0.500H140.500V18z" fill="#fff"/><path d="M128 6l6.800 6.800M134.800 6L128 12.800" stroke="#5a5a5a" stroke-width="1.300" fill="none"/></svg>
<div class="t" style="left:211.90px;top:96px;font-size:11.75px;line-height:13px;height:13px;color:#000000;letter-spacing:-0.37px;font-weight:bold;">Scanning MAIN</div>
<svg class="a" style="left:1424px;top:100px" width="12" height="8" viewBox="0 0 12 8"><path d="M1 1h9.500L5.750 6z" fill="#fff"/></svg>
<div class="a" style="left:179px;top:112px;width:1261px;height:448px;background:#cfd6e5;"></div>
<div class="a" style="left:179px;top:137px;width:1261px;height:1px;background:#d9deea;"></div>
<svg class="a" style="left:186px;top:113px" width="110" height="24" viewBox="0 0 110 24"><path d="M28.500 0.500v20M80.500 0.500v20" stroke="#b7bfd0" stroke-width="1"/><path d="M43 4.500l-6 7h3.500v6h5v-6H49z" fill="#a9a9a9"/><path d="M65 17.500l-6-7h3.500v-6h5v6H71z" fill="#a9a9a9"/><path d="M89.500 5.500l10 11M99.500 5.500l-10 11" stroke="#9c9c9c" stroke-width="1.400" fill="none"/><path d="M6 11l8-3.500 6.500 3v4.500l-8 4-6.500-3.500z" fill="#cbcbcb"/><path d="M6 11l6.500 3.500 8-4M12.500 14.500v4.500" stroke="#b4b4b4" stroke-width=".9" fill="none"/><path d="M10 3v9M6 5.200l8 4.600M14 5.200l-8 4.600" stroke="#e2e2e2" stroke-width="1.500"/></svg>
<div class="a" style="left:181px;top:139px;width:1258px;height:85px;background:#ffffff;"></div>
<div class="a" style="left:179px;top:139px;width:2px;height:85px;background:#dde2ed;"></div>
<div class="a" style="left:181px;top:139px;width:1258px;height:1px;background:#8e9ab2;"></div>
<div class="a" style="left:181px;top:140px;width:1257px;height:22px;background:#f0f0f0;"></div>
<div class="a" style="left:181px;top:162px;width:1257px;height:1px;background:#a3aab8;"></div>
<div class="a" style="left:181px;top:163px;width:30px;height:20px;background:#f0f0f0;"></div>
<div class="a" style="left:181px;top:162px;width:30px;height:1px;background:#8694ab;"></div>
<div class="a" style="left:181px;top:182px;width:30px;height:1px;background:#8694ab;"></div>
<div class="a" style="left:210px;top:140px;width:1px;height:43px;background:#8694ab;"></div>
<div class="a" style="left:181px;top:140px;width:1px;height:43px;background:#8694ab;"></div>
<svg class="a" style="left:192px;top:145px" width="15" height="14" viewBox="0 0 15 14"><path d="M14 0.500V13H1z" fill="#9dbbdb"/></svg>
<svg class="a" style="left:194px;top:167px" width="5" height="10" viewBox="0 0 5 10"><path d="M0.400 2.900L2.900 0.700" stroke="#000" stroke-width="1" fill="none"/><path d="M3.100 0.300V9" stroke="#000" stroke-width="1.150"/></svg>
<div class="a" style="left:212px;top:163px;width:1226px;height:19px;background:#0078d7;"></div>
<div class="a" style="left:411px;top:163px;width:1px;height:19px;background:#ffffff;"></div>
<div class="a" style="left:410px;top:143px;width:1px;height:16px;background:#c6c6c6;"></div>
<div class="a" style="left:611px;top:163px;width:1px;height:19px;background:#ffffff;"></div>
<div class="a" style="left:610px;top:143px;width:1px;height:16px;background:#c6c6c6;"></div>
<div class="a" style="left:811px;top:163px;width:1px;height:19px;background:#ffffff;"></div>
<div class="a" style="left:810px;top:143px;width:1px;height:16px;background:#c6c6c6;"></div>
<div class="a" style="left:1011px;top:163px;width:1px;height:19px;background:#ffffff;"></div>
<div class="a" style="left:1010px;top:143px;width:1px;height:16px;background:#c6c6c6;"></div>
<div class="t" style="left:216.30px;top:144px;font-size:11.75px;line-height:13px;height:13px;color:#000000;letter-spacing:-0.17px;">Category</div>
<div class="t" style="left:416.30px;top:144px;font-size:11.75px;line-height:13px;height:13px;color:#000000;letter-spacing:-0.22px;">Name</div>
<div class="t" style="left:616.00px;top:144px;font-size:11.75px;line-height:13px;height:13px;color:#000000;letter-spacing:0.05px;">Type of data</div>
<div class="t" style="left:816.50px;top:144px;font-size:11.75px;line-height:13px;height:13px;color:#000000;letter-spacing:0.06px;">Initial value</div>
<div class="t" style="left:1016.30px;top:144px;font-size:11.75px;line-height:13px;height:13px;color:#000000;letter-spacing:-0.04px;">Comment</div>
<div class="a" style="left:180px;top:224px;width:1259px;height:18px;background:#d6dbe9;"></div>
<div class="a" style="left:180px;top:242px;width:1259px;height:1px;background:#b4bbcb;"></div>
<div class="a" style="left:198px;top:228px;width:1045px;height:9px;background:#bcc0cc;"></div>
<svg class="a" style="left:186px;top:226px" width="1250" height="12" viewBox="0 0 1250 12"><path d="M6.500 2.500v8.500L1.200 6.750zM1240.500 2.500v8.500l5.300-4.250z" fill="#6e6e6e"/></svg>
<div class="a" style="left:181px;top:247px;width:1258px;height:1px;background:#b3b9c6;"></div>
<div class="a" style="left:181px;top:248px;width:1258px;height:310px;background:#ffffff;border:1px solid #878787;box-sizing:border-box;"></div>
<div class="a" style="left:204px;top:249px;width:1234px;height:16px;background:#e6eaf3;"></div>
<div class="a" style="left:202px;top:249px;width:1px;height:87px;background:#000000;"></div>
<svg class="a" style="left:186px;top:253px" width="12" height="8" viewBox="0 0 12 8"><path d="M1.500 1.500h9.500L6.250 7z" fill="#000"/></svg>
<div class="a" style="left:184px;top:265px;width:7px;height:68px;background:#73b4f0;"></div>
<div class="a" style="left:183px;top:335px;width:1255px;height:1px;background:#c9c9c9;"></div>
<div class="a" style="left:293px;top:265px;width:91px;height:69px;background:#c0f4ff;border:1px solid #000;box-sizing:border-box;"></div>
<div class="a" style="left:203px;top:322px;width:39px;height:1px;background:#000;"></div>
<div class="a" style="left:242px;top:315px;width:1px;height:15px;background:#000;"></div>
<div class="a" style="left:253px;top:315px;width:1px;height:15px;background:#000;"></div>
<div class="a" style="left:254px;top:322px;width:76px;height:1px;background:#000;"></div>
<svg class="a" style="left:326px;top:313px" width="26" height="20" viewBox="0 0 26 20"><path d="M5.800 2q-4.200 7.800 0 15.600M19.800 2q4.200 7.800 0 15.600" stroke="#000" stroke-width="1.100" fill="none"/></svg>
<div class="t" style="left:239.70px;top:299px;font-size:11.50px;line-height:12px;height:12px;color:#3c3c3c;letter-spacing:0.52px;">M3</div>
<div class="t" style="left:332.00px;top:299px;font-size:11.50px;line-height:12px;height:12px;color:#3c3c3c;letter-spacing:-0.70px;">Y7</div>
<svg class="a" style="left:207px;top:252.5px" width="5" height="10" viewBox="0 0 5 10"><path d="M0.400 2.700L2.900 0.600" stroke="#3c3c3c" stroke-width="1" fill="none"/><path d="M3.200 0.300V8.500" stroke="#3c3c3c" stroke-width="1.150"/></svg>
<div class="t" style="left:243.90px;top:250px;font-size:11.75px;line-height:13px;height:13px;color:#8f8f8f;letter-spacing:0.03px;font-style:italic;">Insert label</div>
<div class="t" style="left:324.20px;top:250px;font-size:11.75px;line-height:13px;height:13px;color:#8f8f8f;letter-spacing:0.05px;font-style:italic;">Insert a declaration line</div>
<div class="a" style="left:182px;top:540px;width:1256px;height:17px;background:#d6dbe9;"></div>
<div class="a" style="left:198px;top:544px;width:1021px;height:9px;background:#bcc0cc;"></div>
<svg class="a" style="left:186px;top:542px" width="1250" height="12" viewBox="0 0 1250 12"><path d="M6.500 2.500v8.500L1.200 6.750zM1240.500 2.500v8.500l5.300-4.250z" fill="#6e6e6e"/></svg>
<div class="a" style="left:179px;top:566px;width:1261px;height:22px;background:#4d6082;"></div>
<div class="t" style="left:183.60px;top:571px;font-size:11.25px;line-height:12px;height:12px;color:#ffffff;letter-spacing:-0.30px;">Progress</div>
<svg class="a" style="left:1385px;top:572px" width="52" height="12" viewBox="0 0 52 12"><path d="M1.500 3.500h9l-4.500 5z" fill="#fff"/><path d="M23 1.500h4.500v5H23zM21.500 6.500H29M25.200 6.500v4" stroke="#fff" stroke-width="1.200" fill="none"/><path d="M26.800 1.500v5" stroke="#fff" stroke-width="1.600"/><path d="M41 2l7 7M48 2l-7 7" stroke="#fff" stroke-width="1.700" fill="none"/></svg>
<div class="a" style="left:179px;top:588px;width:1261px;height:176px;background:#efefef;"></div>
<div class="a" style="left:179px;top:588px;width:1261px;height:1px;background:#e3e5ea;"></div>
<div class="a" style="left:1423px;top:589px;width:1px;height:158px;background:#ffffff;"></div>
<div class="a" style="left:179px;top:747px;width:1245px;height:1px;background:#ffffff;"></div>
<svg class="a" style="left:1424px;top:588px" width="16" height="176" viewBox="0 0 16 176"><path d="M4.500 13L8 9.200l3.500 3.800M4.500 147L8 150.800l3.500-3.800" stroke="#b0b0b0" stroke-width="1.800" fill="none"/></svg>
<svg class="a" style="left:179px;top:748px" width="1245" height="16" viewBox="0 0 1245 16"><path d="M10 4.500L5.800 8 10 11.500M1232 4.500l4.200 3.500-4.200 3.500" stroke="#b0b0b0" stroke-width="1.800" fill="none"/></svg>
<div class="a" style="left:179px;top:594px;width:49px;height:1px;background:#000;"></div>
<div class="a" style="left:179px;top:597px;width:49px;height:1px;background:#000;"></div>
<div class="m" style="left:228px;top:590px;">2023/01/30 16:27:34</div>
<div class="a" style="left:361px;top:594px;width:49px;height:1px;background:#000;"></div>
<div class="a" style="left:361px;top:597px;width:49px;height:1px;background:#000;"></div>
<div class="m" style="left:179px;top:604px;">1&gt;</div>
<div class="a" style="left:193px;top:610px;width:42px;height:1px;background:#000;"></div>
<div class="m" style="left:235px;top:604px;"> Program: MAIN Quick compilation </div>
<div class="a" style="left:466px;top:610px;width:42px;height:1px;background:#000;"></div>
<div class="m" style="left:179px;top:618px;">1&gt;Generate Wire Relationships...</div>
<div class="m" style="left:179px;top:632px;">1&gt;Check Node Information...</div>
<div class="m" style="left:179px;top:646px;">1&gt;Check the circuit...</div>
<div class="m" style="left:179px;top:660px;">1&gt;</div>
<div class="a" style="left:193px;top:666px;width:42px;height:1px;background:#000;"></div>
<div class="m" style="left:235px;top:660px;"> Program: MAIN: Compiled successfully (error: 0; warning: 0)</div>
<div class="a" style="left:655px;top:666px;width:42px;height:1px;background:#000;"></div>
<div class="m" style="left:179px;top:674px;">2&gt;</div>
<div class="a" style="left:193px;top:680px;width:28px;height:1px;background:#000;"></div>
<div class="m" style="left:221px;top:674px;">Compiler check completed (error:0; Warning:0)</div>
<div class="a" style="left:536px;top:680px;width:21px;height:1px;background:#000;"></div>
<div class="a" style="left:179px;top:692px;width:49px;height:1px;background:#000;"></div>
<div class="a" style="left:179px;top:695px;width:49px;height:1px;background:#000;"></div>
<div class="m" style="left:228px;top:688px;"> Success: 2; Failure: 0</div>
<div class="a" style="left:389px;top:692px;width:56px;height:1px;background:#000;"></div>
<div class="a" style="left:389px;top:695px;width:56px;height:1px;background:#000;"></div>
<div class="a" style="left:335px;top:598px;width:129px;height:23px;background:transparent;border:4px solid #12999b;border-top-width:3.500px;border-bottom-width:3.500px;border-radius:6px;box-sizing:border-box;"></div>
<div class="a" style="left:179px;top:764px;width:1261px;height:1px;background:#293955;"></div>
<div class="a" style="left:179px;top:765px;width:1261px;height:22px;background:#4d6082;"></div>
<div class="a" style="left:648px;top:764px;width:72px;height:22px;background:#fbfbfb;"></div>
<svg class="a" style="left:185.5px;top:766px" width="11" height="16" viewBox="0 0 11 16"><rect x="0" y="0" width="11" height="15.500" fill="#2b6577"/><rect x="0" y="0" width="11" height="3.500" fill="#0d4a63"/><rect x="1" y="4.500" width="9" height="10" fill="#f4f6f8"/><path d="M2 6.500h7M2 9h7M2 11.500h7" stroke="#6f8f9a" stroke-width="1.200"/></svg>
<div class="t" style="left:201.20px;top:768px;font-size:11.25px;line-height:12px;height:12px;color:#e9ecf3;letter-spacing:0.49px;">Information Output</div>
<svg class="a" style="left:316.5px;top:766px" width="11" height="16" viewBox="0 0 11 16"><rect x="0" y="0" width="11" height="15.500" fill="#2b6577"/><rect x="0" y="0" width="11" height="3.500" fill="#0d4a63"/><rect x="1" y="4.500" width="9" height="10" fill="#f4f6f8"/><path d="M2 6.500h7M2 9h7M2 11.500h7" stroke="#6f8f9a" stroke-width="1.200"/></svg>
<div class="t" style="left:332.50px;top:768px;font-size:11.25px;line-height:12px;height:12px;color:#e9ecf3;letter-spacing:-0.21px;">Search / Replace</div>
<svg class="a" style="left:429.5px;top:766px" width="11" height="16" viewBox="0 0 11 16"><rect x="0" y="0" width="11" height="15.500" fill="#2b6577"/><rect x="0" y="0" width="11" height="3.500" fill="#0d4a63"/><rect x="1" y="4.500" width="9" height="10" fill="#f4f6f8"/><path d="M2 6.500h7M2 9h7M2 11.500h7" stroke="#6f8f9a" stroke-width="1.200"/></svg>
<div class="t" style="left:446.00px;top:768px;font-size:11.25px;line-height:12px;height:12px;color:#e9ecf3;letter-spacing:-0.24px;">PLC Verify result</div>
<svg class="a" style="left:540.5px;top:766px" width="11" height="16" viewBox="0 0 11 16"><rect x="0" y="0" width="11" height="15.500" fill="#2b6577"/><rect x="0" y="0" width="11" height="3.500" fill="#0d4a63"/><rect x="1" y="4.500" width="9" height="10" fill="#f4f6f8"/><path d="M2 6.500h7M2 9h7M2 11.500h7" stroke="#6f8f9a" stroke-width="1.200"/></svg>
<div class="t" style="left:556.70px;top:768px;font-size:11.25px;line-height:12px;height:12px;color:#e9ecf3;letter-spacing:-0.06px;">Device usage list</div>
<svg class="a" style="left:654.5px;top:766px" width="11" height="16" viewBox="0 0 11 16"><rect x="0" y="0" width="11" height="15.500" fill="#2b6577"/><rect x="0" y="0" width="11" height="3.500" fill="#0d4a63"/><rect x="1" y="4.500" width="9" height="10" fill="#f4f6f8"/><path d="M2 6.500h7M2 9h7M2 11.500h7" stroke="#6f8f9a" stroke-width="1.200"/></svg>
<div class="t" style="left:670.60px;top:768px;font-size:11.25px;line-height:12px;height:12px;color:#0d66b6;letter-spacing:-0.26px;">Progress</div>
<div class="a" style="left:613px;top:289px;width:215px;height:185px;background:#e7eaf4;border:1px solid #0c5ea3;box-sizing:border-box;box-shadow:0 0 5px 1px rgba(85,120,155,.5);"></div>
<div class="a" style="left:614px;top:290px;width:213px;height:30px;background:#d6dbe9;"></div>
<div class="t" style="left:625.20px;top:302px;font-size:11.25px;line-height:12px;height:12px;color:#1e1e1e;letter-spacing:-0.11px;">Wecon PLC Editor2</div>
<svg class="a" style="left:805px;top:296px" width="10" height="10" viewBox="0 0 10 10"><path d="M1.300 1.300l7 7M8.300 1.300l-7 7" stroke="#555" stroke-width="1.500" fill="none"/></svg>
<svg class="a" style="left:634px;top:351px" width="30" height="30" viewBox="0 0 30 30"><circle cx="15" cy="15" r="15" fill="#0b83cd"/><rect x="13.200" y="5.300" width="3.600" height="3.700" rx="1" fill="#fff"/><rect x="13.200" y="12.300" width="3.600" height="13.400" rx=".8" fill="#fff"/></svg>
<div class="t" style="left:677.20px;top:358px;font-size:12.75px;line-height:15px;height:15px;color:#1e1e1e;letter-spacing:0.05px;">Compiled successfully!</div>
<div class="a" style="left:621px;top:412px;width:199px;height:54px;background:#bac3d8;"></div>
<div class="a" style="left:725px;top:427px;width:88px;height:30px;background:#fdf4bf;border:1px solid #0b5ba0;box-sizing:border-box;"></div>
<svg class="a" style="left:757.2px;top:436.2px" width="11.4" height="11.4" viewBox="0 0 12 12"><g stroke="#1e1e1e" stroke-width="1.050" fill="none"><path d="M0 1.500H5.500M3 1.500L0.500 7M1.500 5.500H4.500V10.500H1.500Z"/><path d="M8 0L6.500 2.500M7.500 1.500H10.500L9.600 3M6.500 3.500H11.500V11.500H10.500M6.500 3.500V8Q6.500 10.500 5.500 11.500M6.500 6H11.500M6.500 8.500H11.500M9 3.500V11"/></g></svg>
<svg class="a" style="left:769.5px;top:436.2px" width="11.4" height="11.4" viewBox="0 0 12 12"><g stroke="#1e1e1e" stroke-width="1.050" fill="none"><path d="M6 0V1.800M0.500 4.200V2.500H11.500V4.200M2.500 5.500H9.500M6 5.500V10.800M6 8H10M3 7Q3 10 0.300 11.700M2.800 9.200Q5 11.500 11.700 11.500"/></g></svg>
</body></html>
